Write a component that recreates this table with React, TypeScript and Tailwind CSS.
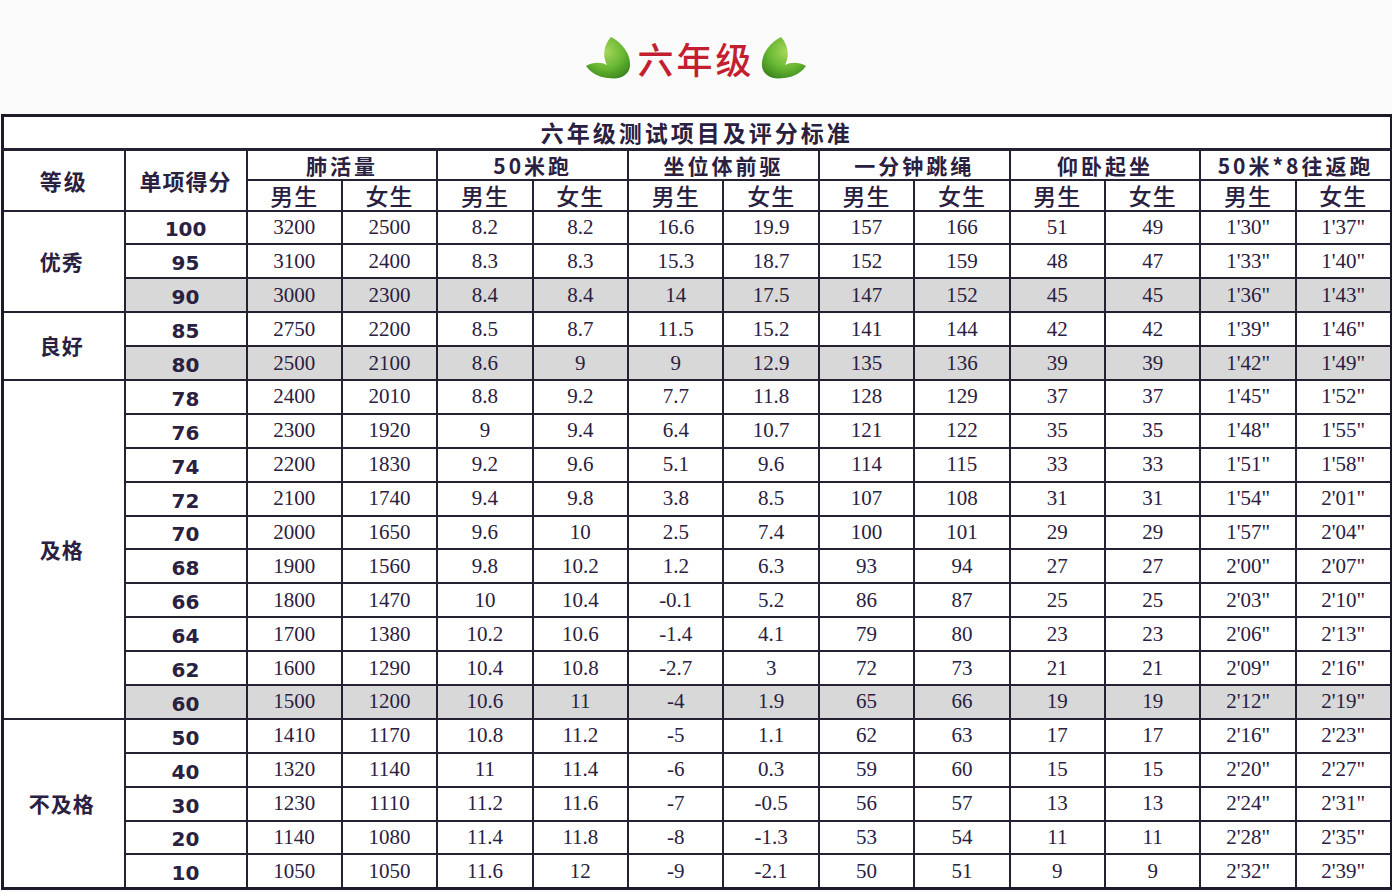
const rows: string[][] = [
  ['100', '3200', '2500', '8.2', '8.2', '16.6', '19.9', '157', '166', '51', '49', '1\'30"', '1\'37"'],
  ['95', '3100', '2400', '8.3', '8.3', '15.3', '18.7', '152', '159', '48', '47', '1\'33"', '1\'40"'],
  ['90', '3000', '2300', '8.4', '8.4', '14', '17.5', '147', '152', '45', '45', '1\'36"', '1\'43"'],
  ['85', '2750', '2200', '8.5', '8.7', '11.5', '15.2', '141', '144', '42', '42', '1\'39"', '1\'46"'],
  ['80', '2500', '2100', '8.6', '9', '9', '12.9', '135', '136', '39', '39', '1\'42"', '1\'49"'],
  ['78', '2400', '2010', '8.8', '9.2', '7.7', '11.8', '128', '129', '37', '37', '1\'45"', '1\'52"'],
  ['76', '2300', '1920', '9', '9.4', '6.4', '10.7', '121', '122', '35', '35', '1\'48"', '1\'55"'],
  ['74', '2200', '1830', '9.2', '9.6', '5.1', '9.6', '114', '115', '33', '33', '1\'51"', '1\'58"'],
  ['72', '2100', '1740', '9.4', '9.8', '3.8', '8.5', '107', '108', '31', '31', '1\'54"', '2\'01"'],
  ['70', '2000', '1650', '9.6', '10', '2.5', '7.4', '100', '101', '29', '29', '1\'57"', '2\'04"'],
  ['68', '1900', '1560', '9.8', '10.2', '1.2', '6.3', '93', '94', '27', '27', '2\'00"', '2\'07"'],
  ['66', '1800', '1470', '10', '10.4', '-0.1', '5.2', '86', '87', '25', '25', '2\'03"', '2\'10"'],
  ['64', '1700', '1380', '10.2', '10.6', '-1.4', '4.1', '79', '80', '23', '23', '2\'06"', '2\'13"'],
  ['62', '1600', '1290', '10.4', '10.8', '-2.7', '3', '72', '73', '21', '21', '2\'09"', '2\'16"'],
  ['60', '1500', '1200', '10.6', '11', '-4', '1.9', '65', '66', '19', '19', '2\'12"', '2\'19"'],
  ['50', '1410', '1170', '10.8', '11.2', '-5', '1.1', '62', '63', '17', '17', '2\'16"', '2\'23"'],
  ['40', '1320', '1140', '11', '11.4', '-6', '0.3', '59', '60', '15', '15', '2\'20"', '2\'27"'],
  ['30', '1230', '1110', '11.2', '11.6', '-7', '-0.5', '56', '57', '13', '13', '2\'24"', '2\'31"'],
  ['20', '1140', '1080', '11.4', '11.8', '-8', '-1.3', '53', '54', '11', '11', '2\'28"', '2\'35"'],
  ['10', '1050', '1050', '11.6', '12', '-9', '-2.1', '50', '51', '9', '9', '2\'32"', '2\'39"'],
];

// grade label cells: first row index -> [label, rowspan]
const grades: Record<number, [string, number]> = {
  0: ['优秀', 3],
  3: ['良好', 2],
  5: ['及格', 10],
  15: ['不及格', 5],
};

const grayRows = [2, 4, 14];

const items = ['肺活量', '50米跑', '坐位体前驱', '一分钟跳绳', '仰卧起坐', '50米*8往返跑'];

const cjk = "font-['Noto_Sans_CJK_SC','Noto_Sans',sans-serif]";
const cell = 'border-2 border-[#262033] text-center align-middle p-0';

function Leaf({ flip }: { flip?: boolean }) {
  const id = flip ? 'lf2' : 'lf1';
  return (
    <svg width="46" height="44" viewBox="0 0 46 44" className={flip ? '-scale-x-100' : ''}>
      <defs>
        <radialGradient id={id} cx="0.45" cy="0.35" r="0.75">
          <stop offset="0" stopColor="#a6d85a" />
          <stop offset="0.55" stopColor="#67b632" />
          <stop offset="1" stopColor="#35801c" />
        </radialGradient>
      </defs>
      <path
        d="M1,30 C8,26 16,26 22,29 C17,19 19,9 26,1 C38,7 46,19 45,30 C44,40 34,44 23,42 C13,41 6,37 1,30 Z"
        fill={`url(#${id})`}
      />
    </svg>
  );
}

export default function App() {
  return (
    <div className="w-[1392px] h-[892px] bg-[#fbfbfb] overflow-hidden">
      <div className="h-[114px] flex items-center justify-center gap-[6px] pt-[2px]">
        <Leaf />
        <span className={`text-[36px] font-medium leading-none text-[#c41f30] tracking-[3px] ${cjk}`}>六年级</span>
        <Leaf flip />
      </div>
      <table className="table-fixed border-collapse w-[1389px] ml-[1px] border-[3px] border-[#1e1a2a] bg-white text-[#2a2040]">
        <colgroup>
          <col className="w-[122px]" />
          <col className="w-[122px]" />
          {Array.from({ length: 12 }).map((_, i) => (
            <col key={i} className="w-[95.4px]" />
          ))}
        </colgroup>
        <thead>
          <tr className="h-[34px]">
            <th colSpan={14} className={`${cell} border-b-[3px] text-[23px] font-bold leading-none tracking-[3px] ${cjk}`}>
              六年级测试项目及评分标准
            </th>
          </tr>
          <tr className="h-[30px]">
            <th rowSpan={2} className={`${cell} text-[22px] font-bold leading-none tracking-[2px] ${cjk}`}>等级</th>
            <th rowSpan={2} className={`${cell} text-[22px] font-bold leading-none tracking-[1px] ${cjk}`}>单项得分</th>
            {items.map((it) => (
              <th key={it} colSpan={2} className={`${cell} text-[21px] font-bold leading-none pt-[2px] tracking-[3px] ${cjk}`}>
                {it}
              </th>
            ))}
          </tr>
          <tr className="h-[31px]">
            {items.map((it) => (
              <>
                <th key={it + 'm'} className={`${cell} text-[23px] font-medium leading-none tracking-[1px] ${cjk}`}>男生</th>
                <th key={it + 'f'} className={`${cell} text-[23px] font-medium leading-none tracking-[1px] ${cjk}`}>女生</th>
              </>
            ))}
          </tr>
        </thead>
        <tbody>
          {rows.map((r, i) => {
            const gray = grayRows.includes(i);
            const g = grades[i];
            return (
              <tr key={i} className="h-[33.9px]">
                {g && (
                  <td rowSpan={g[1]} className={`${cell} bg-white text-[21px] font-bold pr-[4px] tracking-[1px] ${cjk}`}>
                    {g[0]}
                  </td>
                )}
                {r.map((v, j) => (
                  <td
                    key={j}
                    className={`${cell} ${gray ? 'bg-[#d8d8d8]' : 'bg-white'} ${
                      j === 0
                        ? "text-[20px] font-bold font-['DejaVu_Sans',sans-serif] pt-[4px]"
                        : "text-[21px] font-['Liberation_Serif',serif]"
                    } leading-none`}
                  >
                    {v}
                  </td>
                ))}
              </tr>
            );
          })}
        </tbody>
      </table>
    </div>
  );
}
